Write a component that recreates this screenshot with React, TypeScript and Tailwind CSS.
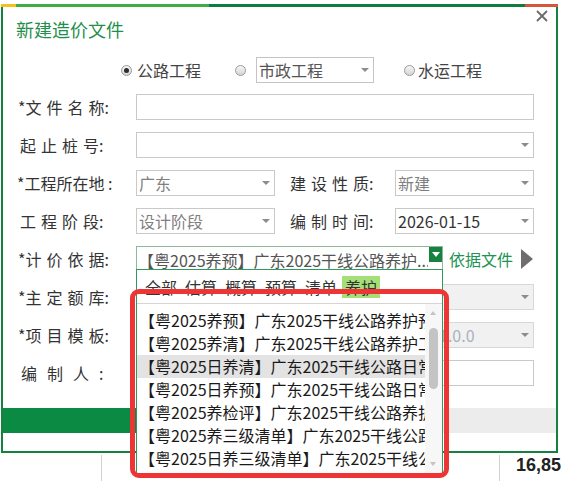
import React from 'react';

const FONT = "font-['Noto_Sans_CJK_SC',sans-serif]";

function Caret() {
  return <span className="ml-auto mr-[4px] h-0 w-0 shrink-0 border-x-[4px] border-t-[4px] border-x-transparent border-t-[#8c8c8c]" />;
}

function Radio({ checked }: { checked?: boolean }) {
  return (
    <span className="flex h-[11px] w-[11px] shrink-0 items-center justify-center rounded-full border border-[#9a9a9a] bg-linear-to-b from-[#f7f7f7] to-[#d4d4d4]">
      {checked && <span className="h-[5px] w-[5px] rounded-full bg-[#2d2d2d]" />}
    </span>
  );
}

// label text with spaced-out characters, the colon sits right after the last one
function Spaced({ chars }: { chars: string }) {
  return (
    <>
      <span className="tracking-[5px]">{chars.slice(0, -1)}</span>
      {chars.slice(-1)}:
    </>
  );
}

function Select({ value, muted, className = '' }: { value: string; muted?: boolean; className?: string }) {
  return (
    <div className={`flex h-[26px] items-center border border-[#c9c9c9] bg-white pl-[2px] ${className}`}>
      <span className={muted ? 'text-[#7f7f7f]' : 'text-[#333]'}>{value}</span>
      <Caret />
    </div>
  );
}

const items = [
  '【粤2025养预】广东2025干线公路养护预算定额',
  '【粤2025养清】广东2025干线公路养护工程量清单',
  '【粤2025日养清】广东2025干线公路日常养护清单',
  '【粤2025日养预】广东2025干线公路日常养护预算',
  '【粤2025养检评】广东2025干线公路养护检测评定',
  '【粤2025养三级清单】广东2025干线公路养护三级清单',
  '【粤2025日养三级清单】广东2025干线公路日常养护三级清单',
];

const tabs = ['全部', '估算', '概算', '预算', '清单', '养护'];

export default function App() {
  return (
    <div className={`relative h-[481px] w-[561px] overflow-hidden bg-white text-[16px] text-[#333] ${FONT}`}>
      {/* dialog */}
      <div className="relative ml-[1px] mt-[4px] flex h-[449px] w-[557px] flex-col border-x-2 border-b-2 border-[#14813f]">
        <div className="-mx-[2px] flex h-[3px]">
          <div className="w-[15px] bg-[#f0c419]" />
          <div className="w-[193px] bg-[#3cae48]" />
          <div className="w-[316px] bg-[#0f7d3f]" />
          <div className="flex-1 bg-[#d6563c]" />
        </div>

        <div className="relative h-[50px] pl-[13px] pt-[9px]">
          <div className="text-[18px] leading-[26px] text-[#1f8f4e]">新建造价文件</div>
          <svg className="absolute right-[8px] top-[3px]" width="12" height="12" viewBox="0 0 12 12">
            <path d="M1 1 L11 11 M11 1 L1 11" stroke="#6a6a6a" strokeWidth="1.8" />
          </svg>
        </div>

        {/* project type */}
        <div className="flex h-[26px] items-center pl-[118px] text-[#444]">
          <Radio checked />
          <span className="ml-[5px]">公路工程</span>
          <span className="ml-[34px]">
            <Radio />
          </span>
          <div className="ml-[10px] flex h-[26px] w-[118px] items-center border border-[#c4c4c4] pl-[2px] text-[#555]">
            市政工程
            <Caret />
          </div>
          <span className="ml-[30px]">
            <Radio />
          </span>
          <span className="ml-[3px]">水运工程</span>
        </div>

        {/* form rows */}
        <div className="mt-[11px] flex flex-col gap-[12px] pr-[22px] leading-[26px]">
          <div className="flex h-[26px] items-center">
            <div className="w-[133px] shrink-0 pl-[15px]">
              *<Spaced chars="文件名称" />
            </div>
            <div className="h-[26px] flex-1 border border-[#c9c9c9]" />
          </div>

          <div className="flex h-[26px] items-center">
            <div className="w-[133px] shrink-0 pl-[17px]">
              <Spaced chars="起止桩号" />
            </div>
            <Select value="" className="flex-1" />
          </div>

          <div className="flex h-[26px] items-center">
            <div className="w-[133px] shrink-0 pl-[14px]">*工程所在地 :</div>
            <Select value="广东" muted className="w-[139px]" />
            <div className="w-[120px] shrink-0 pl-[15px]">
              <Spaced chars="建设性质" />
            </div>
            <Select value="新建" muted className="flex-1" />
          </div>

          <div className="flex h-[26px] items-center">
            <div className="w-[133px] shrink-0 pl-[17px]">
              <Spaced chars="工程阶段" />
            </div>
            <Select value="设计阶段" muted className="w-[139px]" />
            <div className="w-[120px] shrink-0 pl-[15px]">
              <Spaced chars="编制时间" />
            </div>
            <Select value="2026-01-15" className="flex-1" />
          </div>

          <div className="flex h-[26px] items-center">
            <div className="w-[133px] shrink-0 pl-[15px]">
              *<Spaced chars="计价依据" />
            </div>
            <div className="relative flex h-[26px] w-[307px] items-center border-x border-t border-[#8fb89c] pl-[1px] pr-[14px] text-[#555]">
              <span className="overflow-hidden whitespace-nowrap">【粤2025养预】广东2025干线公路养护...</span>
              <span className="absolute right-0 top-0 flex h-[15px] w-[13px] items-center justify-center bg-[#17813f]">
                <span className="h-0 w-0 border-x-[4px] border-t-[5px] border-x-transparent border-t-white" />
              </span>
            </div>
            <span className="ml-[6px] text-[#219452]">依据文件</span>
            <span className="ml-[8px] h-0 w-0 border-y-[10px] border-l-[12px] border-y-transparent border-l-[#6e6e6e]" />
          </div>

          <div className="flex h-[26px] items-center">
            <div className="w-[133px] shrink-0 pl-[15px]">
              *<Spaced chars="主定额库" />
            </div>
            <div className="flex h-[26px] flex-1 items-center border border-[#d8d8d8] bg-[#f1f1f1]">
              <Caret />
            </div>
          </div>

          <div className="flex h-[26px] items-center">
            <div className="w-[133px] shrink-0 pl-[15px]">
              *<Spaced chars="项目模板" />
            </div>
            <div className="flex h-[26px] flex-1 items-center border border-[#d8d8d8] bg-[#f1f1f1]">
              <span className="ml-[302px] text-[#abb1bd]">1.0.0</span>
              <Caret />
            </div>
          </div>

          <div className="flex h-[26px] items-center">
            <div className="w-[133px] shrink-0 pl-[18px] tracking-[10px]">编制人:</div>
            <div className="h-[26px] flex-1 border border-[#c9c9c9]" />
          </div>
        </div>

        <div className="mt-[22px] flex h-[25px]">
          <div className="w-[300px] bg-[#0b8a43]" />
          <div className="flex-1 bg-[#ececec]" />
        </div>
      </div>

      {/* sheet behind the dialog */}
      <div className="mt-[2px] flex h-[26px]">
        <div className="w-[101px]" />
        <div className="w-[399px] border-l border-[#d2d2d2]" />
        <div className="border-l border-[#d2d2d2] pl-[16px] font-['Liberation_Sans',sans-serif] text-[18px] font-bold leading-[20px] text-[#222]">
          16,85
        </div>
      </div>

      {/* open dropdown of 计价依据 */}
      <div className="absolute left-[136px] top-[269px] flex h-[206px] w-[307px] flex-col border border-[#2e9a5c] bg-white">
        <div className="flex h-[34px] shrink-0 items-start gap-[2px] border-b border-[#d4d4d4] pl-[5px] pt-[6px]">
          {tabs.map((t) => (
            <span key={t} className={`px-[3px] leading-[22px] ${t === '养护' ? 'bg-[#a5df78]' : ''}`}>
              {t}
            </span>
          ))}
        </div>
        <div className="flex flex-1">
          <div className="min-w-0 flex-1 pt-[5px]">
            {items.map((it, i) => (
              <div
                key={it}
                className={`h-[23px] overflow-hidden whitespace-nowrap pl-[2px] leading-[23px] text-[#1a1a1a] ${i === 2 ? 'bg-[#e3e3e3]' : ''}`}
              >
                {it}
              </div>
            ))}
          </div>
          <div className="relative w-[17px] bg-[#f7f7f7]">
            <span className="absolute left-[5px] top-[7px] h-0 w-0 border-x-[3px] border-b-[4px] border-x-transparent border-b-[#c4c4c4]" />
            <span className="absolute left-[4px] top-[24px] h-[61px] w-[9px] rounded-full bg-[#c4c4c4]" />
            <span className="absolute bottom-[8px] left-[5px] h-0 w-0 border-x-[3px] border-t-[4px] border-x-transparent border-t-[#c4c4c4]" />
          </div>
        </div>
      </div>

      {/* red highlight box */}
      <div className="absolute left-[130px] top-[289px] h-[189px] w-[319px] rounded-[9px] border-[5px] border-[#ee3434]" />
    </div>
  );
}
